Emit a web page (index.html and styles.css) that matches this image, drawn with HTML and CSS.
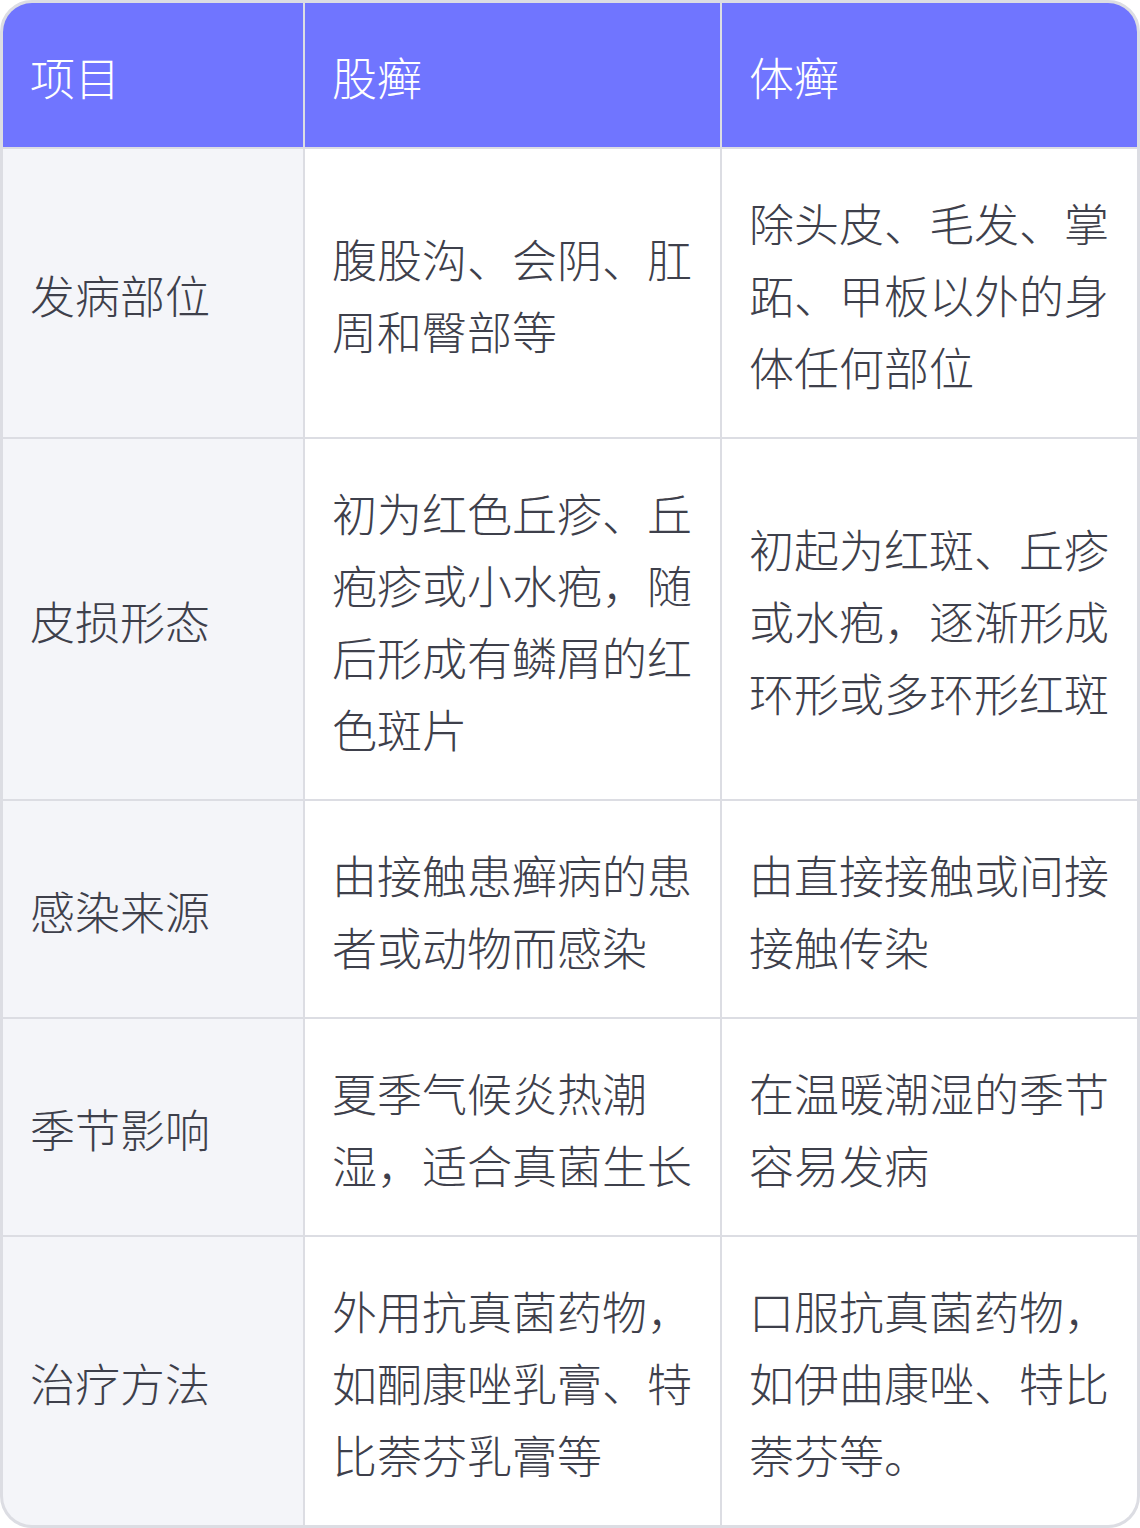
FILE: index.html
```html
<!DOCTYPE html>
<html lang="zh-CN">
<head>
<meta charset="utf-8">
<title>股癣与体癣对比</title>
<link rel="stylesheet" href="styles.css">
</head>
<body>
<div class="frame">
  <div class="grid">
    <div class="cell head">项目</div>
    <div class="cell head">股癣</div>
    <div class="cell head">体癣</div>

    <div class="cell label">发病部位</div>
    <div class="cell">腹股沟、会阴、肛周和臀部等</div>
    <div class="cell">除头皮、毛发、掌跖、甲板以外的身体任何部位</div>

    <div class="cell label">皮损形态</div>
    <div class="cell">初为红色丘疹、丘疱疹或小水疱，随后形成有鳞屑的红色斑片</div>
    <div class="cell">初起为红斑、丘疹或水疱，逐渐形成环形或多环形红斑</div>

    <div class="cell label">感染来源</div>
    <div class="cell">由接触患癣病的患者或动物而感染</div>
    <div class="cell">由直接接触或间接接触传染</div>

    <div class="cell label">季节影响</div>
    <div class="cell">夏季气候炎热潮湿，适合真菌生长</div>
    <div class="cell">在温暖潮湿的季节容易发病</div>

    <div class="cell label">治疗方法</div>
    <div class="cell">外用抗真菌药物，如酮康唑乳膏、特比萘芬乳膏等</div>
    <div class="cell">口服抗真菌药物，如伊曲康唑、特比萘芬等。</div>
  </div>
</div>
</body>
</html>
```

FILE: styles.css
```css
html, body {
  margin: 0;
  padding: 0;
  background: #ffffff;
}

.frame {
  width: 1140px;
  height: 1528px;
  box-sizing: border-box;
  border: 3px solid #dcdde3;
  border-radius: 32px;
  overflow: hidden;
  background: #dcdde3;
}

.grid {
  display: grid;
  grid-template-columns: 300px 415px 415px;
  column-gap: 2px;
  row-gap: 2px;
  font-family: "Noto Sans CJK SC", "Noto Sans", sans-serif;
  font-size: 45px;
  font-weight: 300;
  line-height: 72px;
  color: #3e404b;
}

.cell {
  display: flex;
  align-items: center;
  padding: 38px 27px 34px;
  background: #ffffff;
  word-break: break-all;
}

.head {
  background: #7075ff;
  color: #ffffff;
}

.label {
  background: #f4f5f9;
}
```
